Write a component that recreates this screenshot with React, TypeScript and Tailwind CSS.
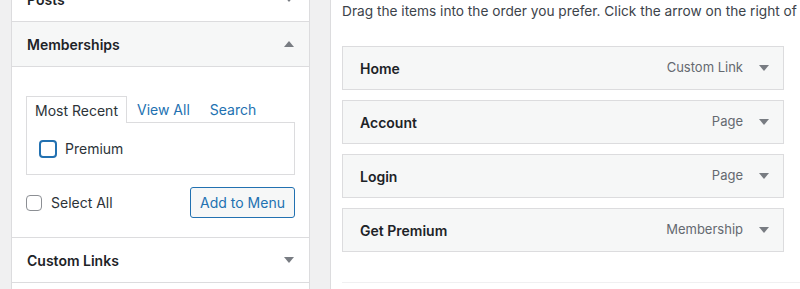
// Menu editor — left "add items" accordion and right menu-structure list.
const items = [
  { title: "Home", type: "Custom Link" },
  { title: "Account", type: "Page" },
  { title: "Login", type: "Page" },
  { title: "Get Premium", type: "Membership" },
];

function Arrow({ up = false }: { up?: boolean }) {
  return (
    <svg width="10" height="6" viewBox="0 0 10 6" className="shrink-0">
      <path d={up ? "M0 6 L5 0 L10 6 Z" : "M0 0 L10 0 L5 6 Z"} fill="#787c82" />
    </svg>
  );
}

function SectionHeader({ title, open = false, bg = "bg-white" }: { title: string; open?: boolean; bg?: string }) {
  return (
    <div className={`flex h-[45px] items-center justify-between border-b border-[#dcdcde] pl-[15px] pr-[15px] ${bg}`}>
      <span className="text-[14px] font-semibold text-[#1d2327]">{title}</span>
      <Arrow up={open} />
    </div>
  );
}

export default function App() {
  return (
    <div
      className="flex h-[289px] w-[800px] overflow-hidden bg-[#f0f0f1] text-[14px] text-[#1d2327]"
      style={{ fontFamily: "Inter, 'Liberation Sans', sans-serif" }}
    >
      <div className="ml-[11px] mt-[-23px] flex w-[299px] shrink-0 flex-col border-x border-[#dcdcde] bg-white">
        <SectionHeader title="Posts" />
        <SectionHeader title="Memberships" open bg="bg-[#f6f7f7]" />
        <div className="border-b border-[#dcdcde] px-[14px] pb-[19px] pt-[29px]">
          <div className="flex h-[26px] items-center">
            <div className="relative z-10 -mb-px flex h-[27px] w-[101px] items-center justify-center self-start border border-b-0 border-[#dcdcde] bg-white text-[#2c3338]">
              Most Recent
            </div>
            <span className="ml-[10px] text-[#2271b1]">View All</span>
            <span className="ml-[20px] text-[#2271b1]">Search</span>
          </div>
          <div className="flex h-[53px] items-center border border-[#dcdcde] pl-[12px]">
            <span className="h-[18px] w-[18px] rounded-[4px] border-2 border-[#2271b1] bg-white" />
            <span className="ml-[8px] text-[#2c3338]">Premium</span>
          </div>
          <div className="mt-[12px] flex h-[31px] items-center justify-between">
            <div className="flex items-center">
              <span className="h-[16px] w-[16px] rounded-[4px] border border-[#8c8f94] bg-white" />
              <span className="ml-[9px] text-[#2c3338]">Select All</span>
            </div>
            <button className="h-[31px] w-[105px] rounded-[3px] border border-[#2271b1] bg-[#f6f7f7] text-[14px] text-[#2271b1]">
              Add to Menu
            </button>
          </div>
        </div>
        <SectionHeader title="Custom Links" />
      </div>

      <div className="ml-[20px] flex-1 border-l border-[#dcdcde] bg-white pl-[11px]">
        <p className="mt-[2px] whitespace-nowrap text-[13.7px] leading-[18px] text-[#3c434a]">
          Drag the items into the order you prefer. Click the arrow on the right of the item to reveal additional
          configuration options.
        </p>
        <ul className="mt-[26px] flex w-[442px] flex-col gap-[10px]">
          {items.map((it) => (
            <li
              key={it.title}
              className="flex h-[44px] items-center justify-between border border-[#dcdcde] bg-[#f6f7f7] pl-[17px] pr-[14px]"
            >
              <span className="font-semibold text-[#1d2327]">{it.title}</span>
              <span className="flex items-center gap-[16px] text-[13px] text-[#646970]">
                {it.type}
                <Arrow />
              </span>
            </li>
          ))}
        </ul>
        <div className="mt-[30px] border-t border-[#f0f0f1]" />
      </div>
    </div>
  );
}
